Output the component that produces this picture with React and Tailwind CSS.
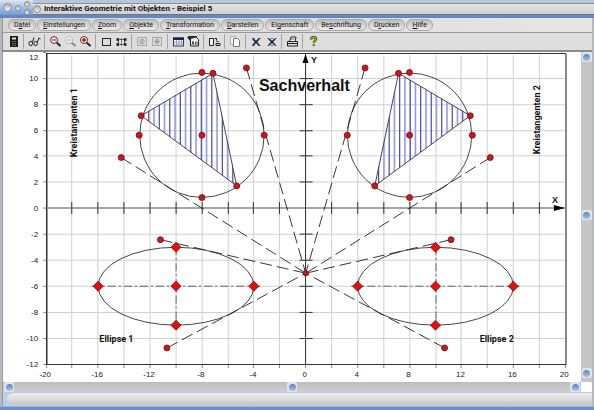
import React from 'react';

const MENU = [
  ['D', 'a', 'tei'],
  ['', 'E', 'instellungen'],
  ['', 'Z', 'oom'],
  ['', 'O', 'bjekte'],
  ['', 'T', 'ransformation'],
  ['', 'D', 'arstellen'],
  ['Ei', 'g', 'enschaft'],
  ['Be', 's', 'chriftung'],
  ['D', 'r', 'ucken'],
  ['', 'H', 'ilfe'],
];

// plot coordinates: one unit is ~13px, the origin sits at (301.7, 155.7)
const px = (x) => 301.7 + x * 12.93;
const py = (y) => 155.7 - y * 12.95;

// same, but on the middle of a pixel so that thin lines stay thin
const gx = (x) => Math.floor(px(x)) + 0.5;
const gy = (y) => Math.floor(py(y)) + 0.5;

const range = (from, to, step) => {
  const out = [];
  for (let v = from; v <= to; v += step) out.push(v);
  return out;
};

const XS = range(-18, 18, 2);
const YS = range(-10, 10, 2);

const Icon = ({ children }) => (
  <svg viewBox="0 0 13 13" className="w-[13px] h-[13px]" fill="none" stroke="#222" strokeWidth="1">
    {children}
  </svg>
);

const Lens = ({ color, glass, dash, children }) => (
  <Icon>
    <circle cx="5" cy="5" r="3.5" stroke={glass} strokeDasharray={dash} fill="#eee" />
    <path d="M7.8 7.8 L11.5 11" stroke={color} strokeWidth="2" />
    {children}
  </Icon>
);

const ICONS = {
  calc: (
    <Icon>
      <rect x="3" y="1" width="8" height="11" fill="#1c1c1c" stroke="none" />
      <rect x="5" y="2.5" width="4" height="2" fill="#ddd" stroke="none" />
      <path d="M5 6.5h4M5 8.5h4M5 10.5h4" stroke="#777" strokeDasharray="1 0.5" />
    </Icon>
  ),
  glasses: (
    <Icon>
      <ellipse cx="2.7" cy="8.5" rx="1.8" ry="2.2" />
      <ellipse cx="7.6" cy="8.5" rx="1.8" ry="2.2" />
      <path d="M4.3 7.5 L6 2.5 M9.2 7.5 L11 3 L12.5 4" />
    </Icon>
  ),
  zoomOut: (
    <Lens color="#222" glass="#6c2a2a">
      <path d="M3 5h4" stroke="#b01010" />
    </Lens>
  ),
  zoomArea: (
    <Lens color="#888" glass="#888" dash="1 1">
      <path d="M3 5h4" stroke="#aaa" />
    </Lens>
  ),
  zoomIn: (
    <Lens color="#222" glass="#6c2a2a">
      <path d="M3 5h4M5 3v4" stroke="#b01010" strokeWidth="1.4" />
    </Lens>
  ),
  box: (
    <Icon>
      <rect x="2.5" y="3.5" width="8" height="7" />
    </Icon>
  ),
  handles: (
    <Icon>
      <path d="M3.5 4v6M9.5 4v6M3 4.5h7M3 9.5h7" strokeDasharray="1.5 0.8" />
      <path d="M1.5 3h2.5v3H1.5zM1.5 8h2.5v3H1.5zM9 3h2.5v3H9zM9 8h2.5v3H9z" fill="#333" stroke="none" />
      <path d="M6.5 3.5v7" strokeDasharray="1 1" />
    </Icon>
  ),
  gridOff: (
    <Icon>
      <rect x="1.5" y="2.5" width="9" height="8" stroke="#a8a8a8" />
      <circle cx="6" cy="6.5" r="2.3" stroke="#999" />
      <path d="M6 5v3" stroke="#888" />
    </Icon>
  ),
  pointOff: (
    <Icon>
      <rect x="1.5" y="2.5" width="9" height="8" stroke="#a8a8a8" />
      <circle cx="6" cy="6.5" r="2.3" stroke="#aaa" />
      <path d="M4 6.5h4M6 4.5v4" stroke="#888" />
    </Icon>
  ),
  table: (
    <Icon>
      <rect x="1.5" y="3" width="10" height="8" fill="#fff" stroke="#333a66" />
      <rect x="1" y="2.5" width="11" height="2.5" fill="#1c2350" stroke="none" />
      <path d="M4.5 5v6M7 5v6M9.5 5v6M2 7h9M2 9h9" stroke="#70769c" strokeWidth="0.6" />
    </Icon>
  ),
  sheet: (
    <Icon>
      <path d="M1.5 1.5h8v2H1.5z" fill="#2c3350" />
      <path d="M3.5 4v7h8V4.5L9.5 2.5" fill="#f4f4f4" />
      <path d="M5 10l1-4l1 4M8.5 10V7h1.5v3M5.3 8.5h1.4" strokeWidth="0.7" />
      <path d="M0.5 2l3 4" />
    </Icon>
  ),
  chart: (
    <Icon>
      <path d="M1.5 3.5h4v7h-4z" fill="#f4f4f4" />
      <path d="M6.5 3.5h2v2M8 8.5h4v2H8zM8.5 6.5h2" />
    </Icon>
  ),
  copy: (
    <Icon>
      <path d="M1.5 1.5h5v8h-5z" fill="#f8f8f8" stroke="#aaa" />
      <path d="M4.5 3.5h4l2 2v6h-6z" fill="#fff" stroke="#777" />
    </Icon>
  ),
  cross: (
    <Icon>
      <path d="M3 4l6 6M9 4L3 10" stroke="#1a2148" strokeWidth="1.7" />
      <path d="M2 3.5h2.5M8 3.5h2.5M2 10.5h2.5M8 10.5h2.5" stroke="#1a2148" strokeWidth="0.8" />
    </Icon>
  ),
  crossAll: (
    <Icon>
      <path d="M4 4l6 6M10 4L4 10" stroke="#1a2148" strokeWidth="1.7" />
      <path d="M2.5 3.5h9.5M2.5 10.5h9.5" stroke="#555c80" strokeDasharray="2 1.5" />
    </Icon>
  ),
  print: (
    <Icon>
      <path d="M3.5 6.5L5 2h5L9 6.5" fill="#fff" />
      <path d="M1.5 6.5h10v4.5h-10z" fill="#ddd" />
      <path d="M1.5 8.5h10" />
      <path d="M5 4h3.5" strokeWidth="0.7" />
    </Icon>
  ),
  help: (
    <Icon>
      <path d="M4 4.5C4 1.5 9 1.5 9 4C9 5.7 6.8 5.7 6.8 7.8" stroke="#3a3a10" strokeWidth="2.4" />
      <path d="M4 4.3C4 1.8 8.8 1.8 8.8 4C8.8 5.7 6.7 5.7 6.7 7.6" stroke="#b5ab1c" strokeWidth="1.2" />
      <rect x="5.7" y="8.9" width="2.2" height="2.2" fill="#7a7414" stroke="none" />
    </Icon>
  ),
};

const TOOLS = [
  [['calc', 'Rechner']],
  [['glasses', 'Ansicht']],
  [['zoomOut', 'Verkleinern'], ['zoomArea', 'Ausschnitt'], ['zoomIn', 'Vergrößern']],
  [['box', 'Rahmen'], ['handles', 'Griffe']],
  [['gridOff', 'Raster'], ['pointOff', 'Punkt']],
  [['table', 'Tabelle'], ['sheet', 'Blatt']],
  [['chart', 'Anordnen']],
  [['copy', 'Kopieren']],
  [['cross', 'Löschen'], ['crossAll', 'Alles löschen']],
  [['print', 'Drucken']],
  [['help', 'Hilfe']],
];

const Dot = ({ x, y, r = 3 }) => (
  <circle cx={x} cy={y} r={r} fill="#c8181c" stroke="#6e1014" strokeWidth="0.8" />
);

const Diamond = ({ x, y }) => (
  <path d={`M${x} ${y - 5}l5 5l-5 5l-5 -5z`} fill="#ee0a0a" stroke="#7a0c0c" strokeWidth="0.8" />
);

// One half of the figure. side is -1 for the left and 1 for the right half.
const Figure = ({ side }) => {
  const X = (v) => px(side * v);
  const origin = [px(0), py(-5)];
  const tri = [[7.15, 10.38], [12.68, 7.12], [5.32, 1.72]];
  const tangents = [[4.57, 10.8], [14.22, 3.9], [11.2, -2.42], [10.7, -10.75]];
  const clip = side < 0 ? 'tri-left' : 'tri-right';
  const points = tri.map(([x, y]) => `${X(x)},${py(y)}`).join(' ');

  return (
    <g>
      <clipPath id={clip}>
        <polygon points={points} />
      </clipPath>
      <g clipPath={`url(#${clip})`}>
        {range(0, 18, 1).map((i) => (
          <line
            key={i}
            x1={X(12.1 - i * 0.405)}
            x2={X(12.1 - i * 0.405)}
            y1={py(11)}
            y2={py(1)}
            stroke={i % 2 ? '#9a98ea' : '#3a389c'}
            strokeWidth={i % 2 ? 1.6 : 1.1}
          />
        ))}
      </g>
      <polygon points={points} fill="none" stroke="#33333f" strokeWidth="0.9" />
      <circle cx={X(8)} cy={py(5.62)} r="62" fill="none" stroke="#333" strokeWidth="0.9" />
      <ellipse cx={X(10)} cy={py(-6)} rx="77.6" ry="38.8" fill="none" stroke="#333" strokeWidth="0.9" />
      <g stroke="#666" strokeWidth="1" strokeDasharray="8 3 2 3">
        <line x1={X(3.5)} x2={X(16.5)} y1={gy(-6)} y2={gy(-6)} />
        <line x1={gx(side * 10)} x2={gx(side * 10)} y1={py(-3)} y2={py(-9)} />
      </g>
      {tangents.map(([x, y]) => (
        <line key={x} x1={X(x)} y1={py(y)} x2={origin[0]} y2={origin[1]} stroke="#222" strokeWidth="0.9" strokeDasharray="12 5" />
      ))}
      {tangents.map(([x, y]) => <Dot key={x} x={X(x)} y={py(y)} />)}
      {tri.map(([x, y]) => <Dot key={x} x={X(x)} y={py(y)} />)}
      <Dot x={X(8)} y={py(5.62)} />
      <Dot x={X(8)} y={py(10.45)} />
      <Dot x={X(8)} y={py(0.82)} />
      <Dot x={X(3.2)} y={py(5.62)} />
      <Dot x={X(12.84)} y={py(5.62)} />
      {[[10, -6], [10, -3], [10, -9], [4, -6], [16, -6]].map(([x, y]) => (
        <Diamond key={`${x}${y}`} x={X(x)} y={py(y)} />
      ))}
    </g>
  );
};

const Plot = () => (
  <svg
    viewBox="0 0 576 329"
    className="block w-full h-auto bg-white font-['Liberation_Sans',sans-serif]"
    role="img"
    aria-label="Sachverhalt"
  >
    {/* Grid */}
    <g stroke="#d0d0d0">
      {XS.map((x) => <line key={x} x1={gx(x)} x2={gx(x)} y1="3" y2="311" />)}
      {YS.map((y) => <line key={y} x1="44" x2="560" y1={gy(y)} y2={gy(y)} />)}
    </g>
    <g stroke="#888">
      {range(-12, 12, 2).map((y) => <line key={y} x1="40" x2="43" y1={gy(y)} y2={gy(y)} />)}
      {range(-20, 20, 2).map((x) => <line key={x} x1={gx(x)} x2={gx(x)} y1="312" y2="315" />)}
    </g>

    {/* Axes */}
    <g stroke="#333">
      <line x1="43" x2="560" y1={gy(0)} y2={gy(0)} stroke="#666" />
      <line x1={gx(0)} x2={gx(0)} y1="2" y2="311" />
      {XS.filter((x) => x !== 0).map((x) => (
        <line key={x} x1={gx(x)} x2={gx(x)} y1={gy(0) - 6} y2={gy(0) + 6} />
      ))}
      {YS.filter((y) => y !== 0).map((y) => (
        <line key={y} x1={gx(0) - 6} x2={gx(0) + 7} y1={gy(y)} y2={gy(y)} />
      ))}
    </g>
    <path d="M301.5 2l3 9h-6zM560 155.5l-11-3v6z" fill="#000" />

    <Figure side={-1} />
    <Figure side={1} />
    <Dot x={px(0)} y={py(-5)} r={2.6} />

    {/* Frame */}
    <g shapeRendering="crispEdges" fill="none" strokeWidth="1">
      <path d="M561 2V312" stroke="#888" strokeWidth="2" />
      <path d="M43.5 1V311.5H561M43 1.5H561" stroke="#333" />
      <path d="M44.5 2V311" stroke="#999" />
    </g>

    {/* Labels */}
    <g fontSize="8" fill="#222">
      {range(-12, 12, 2).map((y) => (
        <text key={y} x="35" y={Math.max(py(y) + 3, 8)} textAnchor="end">{y}</text>
      ))}
      {range(-20, 20, 4).map((x) => (
        <text key={x} x={px(x) - 1} y="324" textAnchor="middle">{x}</text>
      ))}
    </g>
    <g fontSize="9" fontWeight="bold" fill="#111">
      <text x="307" y="11">Y</text>
      <text x="547" y="150">X</text>
    </g>
    <g fontSize="9" fontWeight="bold" fill="#111" className="font-[Roboto,sans-serif]">
      <text x="96" y="289">Ellipse 1</text>
      <text x="475" y="289">Ellipse 2</text>
      <text transform="translate(74 105) rotate(-90)">Kreistangenten 1</text>
      <text transform="translate(535 102) rotate(-90)">Kreistangenten 2</text>
    </g>
    <text x="255" y="39" fontSize="16" fontWeight="bold" fill="#111">Sachverhalt</text>
  </svg>
);

const Knob = ({ label }) => (
  <button
    type="button"
    aria-label={label}
    className="shrink-0 w-[10px] h-[10px] flex items-center justify-center rounded-xs bg-[#dfe5ee]"
  >
    <span className="block w-[7px] h-[7px] rounded-full bg-linear-to-b from-[#5c82b4] to-[#a9c6e6]" />
  </button>
);

const Bubble = ({ children }) => (
  <span className="flex items-center justify-center rounded-full border border-[#8c8f96] bg-linear-to-b from-[#aeb2b8] to-[#f2f2f2]">
    {children}
  </span>
);

export default function App() {
  return (
    <div className="min-h-screen flex flex-col bg-[#dedede] font-[Roboto,sans-serif] text-[#111]">
      {/* Title bar */}
      <header className="flex items-stretch h-[18px] border-b-[3px] border-[#6388bd] bg-[#d8d8d8]">
        <div className="flex items-center gap-[3px] w-[33px] pl-[3px] bg-linear-to-b from-[#dce5f1] to-[#6f9ad2]">
          <Bubble><span className="w-[7px] h-[7px]" /></Bubble>
          <Bubble><span className="w-[4px] h-[4px]" /></Bubble>
          <span className="flex flex-col gap-[2px]">
            <Bubble><span className="w-[4px] h-[4px]" /></Bubble>
            <Bubble><span className="w-[4px] h-[4px]" /></Bubble>
          </span>
        </div>
        <div className="flex-1 flex flex-col">
          <div className="h-[4px] border-b border-[#8d8f95] bg-[#b8c6d9]" />
          <div className="flex-1 flex items-center gap-[3px] border-b border-[#777] bg-linear-to-b from-[#e4e4e4] to-[#cfcfcf]">
            <Bubble><span className="w-[6px] h-[6px]" /></Bubble>
            <h1 className="text-[8px] leading-[10px] font-bold whitespace-nowrap">
              Interaktive Geometrie mit Objekten - Beispiel 5
            </h1>
          </div>
        </div>
      </header>

      <div className="flex-1 flex flex-col border-x-2 border-[#b4b8c0]">
        {/* Menu */}
        <nav className="flex items-center gap-px h-[15px] pl-[5px] border-l border-b border-[#999] bg-linear-to-r from-[#d6d6d6] to-[#e6e6e6]">
          {MENU.map(([before, key, after]) => (
            <button
              key={before + key + after}
              type="button"
              className="h-[12px] px-[5px] rounded-full border border-[#a8a8a8] bg-linear-to-b from-[#bdbdbd] to-[#ececec] text-[7px] leading-[10px] whitespace-nowrap"
            >
              {before}
              <span className="underline">{key}</span>
              {after}
            </button>
          ))}
        </nav>

        {/* Toolbar */}
        <div role="toolbar" className="flex items-center h-[19px] border-l border-b-2 border-[#8c8c8c] bg-[#dedede]">
          {TOOLS.map((group) => (
            <div
              key={group[0][0]}
              className="flex items-center h-[15px] pl-[3px] pr-[2px] border-r border-[#a4a4a4] last:border-r-0"
            >
              {group.map(([name, label]) => (
                <button key={name} type="button" aria-label={label} className="w-[15px] h-[15px] flex items-center justify-center">
                  {ICONS[name]}
                </button>
              ))}
            </div>
          ))}
        </div>

        {/* Drawing area */}
        <div className="flex border-l border-[#999]">
          <div className="flex-1 min-w-0">
            <Plot />
          </div>
          <div className="flex flex-col justify-between items-center w-[11px] pb-1 bg-[#c6c6c6]">
            <Knob label="Nach oben" />
            <Knob label="Vertikal" />
            <Knob label="Nach unten" />
          </div>
        </div>
        <div className="flex">
          <div className="flex-1 flex justify-between items-center h-[10px] px-px border-l border-[#999] bg-linear-to-b from-[#bdbdbd] to-[#cecece]">
            <Knob label="Nach links" />
            <Knob label="Horizontal" />
            <Knob label="Nach rechts" />
          </div>
          <div className="w-[11px] bg-white" />
        </div>

        {/* Status bar */}
        <div className="h-[14px] py-px pl-1 border-l border-[#999] bg-[#b9cfe9]">
          <div className="h-full rounded-l-full rounded-r-sm bg-linear-to-b from-[#ececec] via-[#dedede] to-[#c4c4c4]" />
        </div>
      </div>
      <footer className="h-[5px] border-t border-[#9fb3cf] bg-[#6b92c8]" />
    </div>
  );
}
